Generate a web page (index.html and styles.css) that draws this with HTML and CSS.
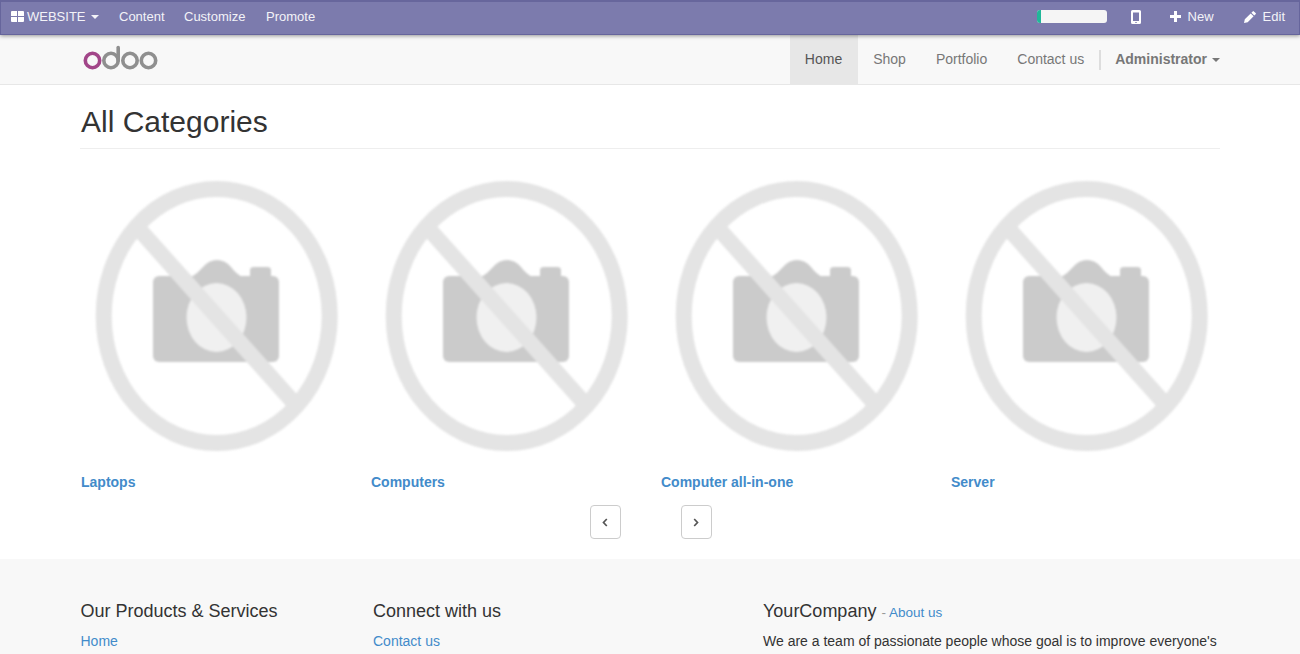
FILE: index.html
```html
<!DOCTYPE html>
<html lang="en">
<head>
<meta charset="utf-8">
<title>All Categories</title>
<link rel="stylesheet" href="styles.css">
</head>
<body>
<svg width="0" height="0" class="defs">
  <defs>
    <symbol id="no-photo" viewBox="80 165 274 294">
      <g fill="#cbcbcb">
        <rect x="153" y="276" width="126" height="86" rx="6"/>
        <path d="M190 278Q198 273 203 267Q209 260 217 260Q225 260 231 267Q236 274 244 278Z"/>
        <path d="M250 278V270Q250 267 254 267H267Q271 267 271 270V278Z"/>
      </g>
      <ellipse cx="216.500" cy="317.500" rx="30" ry="34.500" fill="#f0f0f0"/>
      <g fill="none" stroke="#e4e4e4">
        <path d="M138 228L295 404" stroke-width="16"/>
        <ellipse cx="216.700" cy="316" rx="113" ry="127" stroke-width="16"/>
      </g>
    </symbol>
  </defs>
</svg>
<nav class="topbar">
  <a class="brand"><svg width="13" height="11" viewBox="0 0 13 11"><path fill="#fff" d="M1 0H6V5H0V1Q0 0 1 0ZM7 0H12Q13 0 13 1V5H7ZM0 6H6V11H1Q0 11 0 10ZM7 6H13V10Q13 11 12 11H7Z"/></svg><span class="t-site">WEBSITE</span><i class="caret"></i></a>
  <a class="t-content">Content</a><a class="t-custom">Customize</a><a class="t-promote">Promote</a>
  <div class="tools">
    <div class="progress"><div class="done"></div></div>
    <svg class="phone" width="10" height="14" viewBox="0 0 10 14"><path fill="#fff" fill-rule="evenodd" d="M1.500 0H8.500Q10 0 10 1.500V12.500Q10 14 8.500 14H1.500Q0 14 0 12.500V1.500Q0 0 1.500 0ZM2 2.500V11H8V2.500ZM4.300 12V13H5.700V12Z"/></svg>
    <svg class="plus" width="11" height="11" viewBox="0 0 11 11"><path d="M5.500 0V11M0 5.500H11" stroke="#fff" stroke-width="3"/></svg><span class="t-new">New</span>
    <svg class="pencil" width="12" height="12" viewBox="0 0 12 12"><path fill="#fff" d="M0 12L.8 8.300L6.700 2.400L9.600 5.300L3.700 11.200ZM7.400 1.700L8.700.4Q9.300-.2 9.900.4L11.600 2.100Q12.200 2.700 11.600 3.300L10.300 4.600Z"/></svg><span class="t-edit">Edit</span>
  </div>
</nav>
<header class="site-nav">
  <div class="container">
    <svg class="logo" width="76" height="26" viewBox="0 0 76 26" fill="none" stroke="#8f8f8f" stroke-width="3.600">
      <circle cx="9.500" cy="15.500" r="7.200" stroke="#a24689"/><circle cx="28" cy="15.500" r="7.200"/><circle cx="47" cy="15.500" r="7.200"/><circle cx="65.500" cy="15.500" r="7.200"/><path d="M35.200 2.500V15.500" stroke-linecap="round"/>
    </svg>
    <a class="active"><span class="t-home">Home</span></a><a><span class="t-shop">Shop</span></a><a><span class="t-port">Portfolio</span></a><a><span class="t-contact">Contact us</span></a>
    <span class="divider"></span>
    <a class="user"><span class="t-admin">Administrator</span><i class="caret"></i></a>
  </div>
</header>
<main class="container">
  <h1><span class="t-h1">All Categories</span></h1>
  <div class="grid">
    <div class="cat"><svg><use href="#no-photo"/></svg><a>Laptops</a></div>
    <div class="cat"><svg><use href="#no-photo"/></svg><a>Computers</a></div>
    <div class="cat"><svg><use href="#no-photo"/></svg><a>Computer all-in-one</a></div>
    <div class="cat"><svg><use href="#no-photo"/></svg><a>Server</a></div>
  </div>
  <div class="pager">
    <button aria-label="Previous"><svg width="6" height="9" viewBox="0 0 6 9"><path d="M4.800 1L1.500 4.500L4.800 8"/></svg></button>
    <button aria-label="Next"><svg width="6" height="9" viewBox="0 0 6 9"><path d="M1.200 1L4.500 4.500L1.200 8"/></svg></button>
  </div>
</main>
<footer>
  <div class="container cols">
    <section><h4>Our Products &amp; Services</h4><a>Home</a></section>
    <section><h4>Connect with us</h4><a>Contact us</a></section>
    <section><h4>YourCompany <small>- <a>About us</a></small></h4><p>We are a team of passionate people whose goal is to improve everyone's</p></section>
  </div>
</footer>
</body>
</html>
```
FILE: styles.css
```css
* { box-sizing: border-box; }
html, body { margin: 0; height: 100%; overflow: hidden; }
body { font: 14px/20px "Liberation Sans", Arial, sans-serif; color: #333; background: #fff; }
.defs { position: absolute; }
.container { width: 1140px; margin: 0 auto; }
.topbar { height: 35px; background: #7c7bad; border: 1px solid #66659c; border-top-width: 2px; border-top-color: #67669c; display: flex; align-items: center; padding: 0 14px 3px 10px; font-size: 13px; color: #f3f3f8; box-shadow: 0 1px 4px rgba(0,0,0,.4); position: relative; }
.brand { display: flex; align-items: center; width: 108px; }
.brand svg { margin-top: -1px; }
.brand span { margin-left: 3px; }
.caret { border: 4px solid transparent; border-top-color: currentColor; border-bottom: 0; margin-left: 6px; }
.brand .caret { margin-left: 5px; }
.t-content { width: 65px; }
.t-custom { width: 82px; }
.tools { margin-left: auto; display: flex; align-items: center; }
.progress { width: 70px; height: 13px; border-radius: 3px; background: #f5f5f5; overflow: hidden; margin-right: 24px; }
.done { width: 4px; height: 13px; background: #21b799; }
.phone { margin-right: 29px; }
.plus { margin-right: 7px; }
.pencil { margin: 0 7px 0 30px; }
.site-nav { height: 50px; background: #f8f8f8; border-bottom: 1px solid #e7e7e7; }
.site-nav .container { display: flex; height: 49px; align-items: center; color: #777; }
.logo { margin: 0 auto 3px 3px; }
.site-nav a { padding: 0 15px; height: 49px; line-height: 49px; }
.site-nav .active { background: #e7e7e7; color: #555; padding-right: 16px; }
.divider { width: 2px; height: 20px; background: #ddd; }
.site-nav .user { font-weight: bold; padding: 0 0 0 14px; display: flex; align-items: center; }
.user .caret { margin-left: 5px; }
h1 { font-size: 30px; line-height: 33px; font-weight: 500; margin: 20px 0 16px; height: 44px; border-bottom: 1px solid #eee; }
h1 span { margin-left: 1px; }
.grid { display: grid; grid-template-columns: repeat(4, 290px); }
.cat svg { display: block; width: 274px; height: 294px; filter: blur(1px); }
.cat a { display: block; margin: 13px 0 0 1px; font-weight: bold; line-height: 20px; }
.cat a, footer a { color: #428bca; }
.pager { display: flex; gap: 60px; margin: 13px 0 0 510px; }
button { width: 31px; height: 34px; border: 1px solid #ccc; border-radius: 4px; background: #fff; padding: 0 1px 0 0; display: flex; align-items: center; justify-content: center; }
button path { fill: none; stroke: #555; stroke-width: 1.7; }
footer { background: #f8f8f8; height: 120px; margin-top: 20px; padding-top: 42px; }
.cols { display: grid; grid-template-columns: 292.5px 390px 457px; padding-left: .5px; }
h4 { font-size: 18px; line-height: 20px; font-weight: 500; margin: 0 0 10px; height: 20px; }
small { font-size: 13.5px; line-height: 1; color: #999; }
p { margin: 0; white-space: nowrap; }
```
